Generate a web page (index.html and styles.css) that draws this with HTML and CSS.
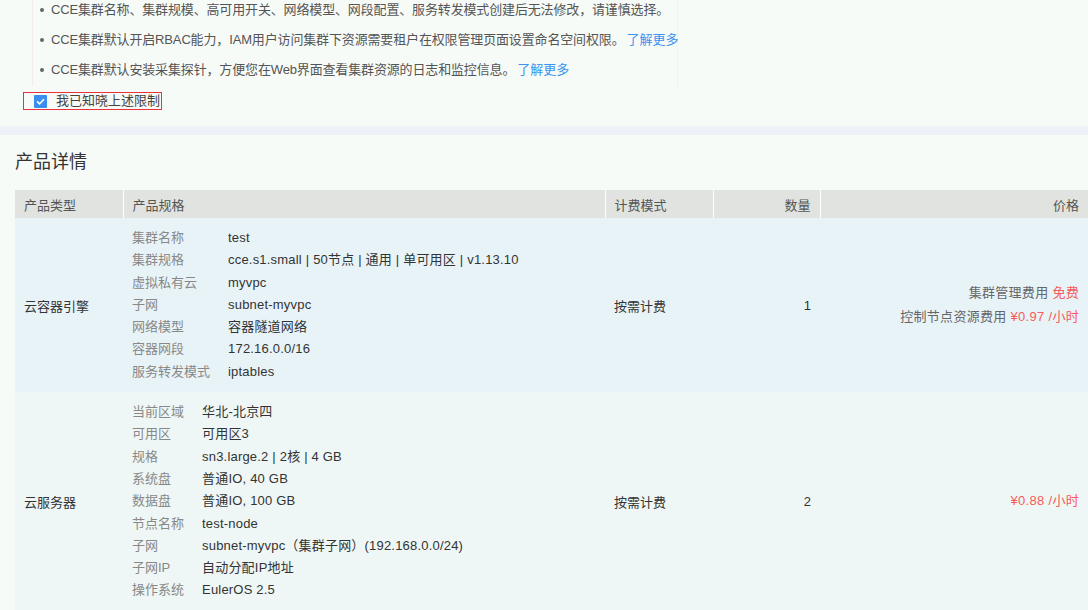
FILE: index.html
```html
<!DOCTYPE html>
<html lang="zh-CN">
<head>
    <meta charset="UTF-8">
    <meta name="viewport" content="width=device-width, initial-scale=1.0">
    <title>产品详情</title>
    <link rel="stylesheet" href="styles.css">
</head>
<body>

    <div class="notice-area">
        <ul class="notice">
            <li>CCE集群名称、集群规模、高可用开关、网络模型、网段配置、服务转发模式创建后无法修改，请谨慎选择。</li>
            <li>CCE集群默认开启RBAC能力，IAM用户访问集群下资源需要租户在权限管理页面设置命名空间权限。<a href="#" class="more">了解更多</a></li>
            <li>CCE集群默认安装采集探针，方便您在Web界面查看集群资源的日志和监控信息。<a href="#" class="more">了解更多</a></li>
        </ul>
        <label class="agree">
            <span class="checkbox">
                <svg width="9" height="7" viewBox="0 0 9 7"><path d="M1 3.4 L3.5 5.8 L8 1.2" fill="none" stroke="#fff" stroke-width="1.6"/></svg>
            </span>
            我已知晓上述限制
        </label>
    </div>

    <div class="divider"></div>

    <div class="details">
        <h2 class="section-title">产品详情</h2>

        <table class="product-table">
            <colgroup>
                <col style="width: 108px">
                <col style="width: 482px">
                <col style="width: 108px">
                <col style="width: 107px">
                <col>
            </colgroup>
            <thead>
                <tr>
                    <th>产品类型</th>
                    <th>产品规格</th>
                    <th>计费模式</th>
                    <th class="num">数量</th>
                    <th class="num">价格</th>
                </tr>
            </thead>
            <tbody>
                <tr class="row-cce">
                    <td>云容器引擎</td>
                    <td>
                        <div class="spec">
                            <span class="key">集群名称</span><span class="val">test</span>
                            <span class="key">集群规格</span><span class="val">cce.s1.small | 50节点 | 通用 | 单可用区 | v1.13.10</span>
                            <span class="key">虚拟私有云</span><span class="val">myvpc</span>
                            <span class="key">子网</span><span class="val">subnet-myvpc</span>
                            <span class="key">网络模型</span><span class="val">容器隧道网络</span>
                            <span class="key">容器网段</span><span class="val">172.16.0.0/16</span>
                            <span class="key">服务转发模式</span><span class="val">iptables</span>
                        </div>
                    </td>
                    <td>按需计费</td>
                    <td class="num">1</td>
                    <td class="num price">
                        <div>集群管理费用 <span class="red">免费</span></div>
                        <div>控制节点资源费用 <span class="red">¥0.97 /小时</span></div>
                    </td>
                </tr>
                <tr class="row-ecs">
                    <td>云服务器</td>
                    <td>
                        <div class="spec">
                            <span class="key">当前区域</span><span class="val">华北-北京四</span>
                            <span class="key">可用区</span><span class="val">可用区3</span>
                            <span class="key">规格</span><span class="val">sn3.large.2 | 2核 | 4 GB</span>
                            <span class="key">系统盘</span><span class="val">普通IO, 40 GB</span>
                            <span class="key">数据盘</span><span class="val">普通IO, 100 GB</span>
                            <span class="key">节点名称</span><span class="val">test-node</span>
                            <span class="key">子网</span><span class="val">subnet-myvpc（集群子网）(192.168.0.0/24)</span>
                            <span class="key">子网IP</span><span class="val">自动分配IP地址</span>
                            <span class="key">操作系统</span><span class="val">EulerOS 2.5</span>
                        </div>
                    </td>
                    <td>按需计费</td>
                    <td class="num">2</td>
                    <td class="num price"><span class="red">¥0.88 /小时</span></td>
                </tr>
            </tbody>
        </table>
    </div>

</body>
</html>
```

FILE: styles.css
```css
:root {
    --page-bg: #f7fbf8;
    --text-color: #333;
    --muted-color: #555;
    --label-color: #888;
    --link-color: #3b93f0;
    --red-color: #f95a5a;
}

body {
    margin: 0;
    font-family: "Liberation Sans", "Noto Sans CJK SC", sans-serif;
    font-size: 13px;
    color: var(--text-color);
    background-color: var(--page-bg);
    overflow: hidden;
}

.notice-area {
    height: 126px;
}

.notice {
    list-style: none;
    margin: 0 0 0 32px;
    padding: 0 0 6px 18px;
    width: 626px;
    border-left: 1px solid #f4ecec;
    border-right: 1px solid #f1f1ef;
}

.notice li {
    position: relative;
    height: 20px;
    line-height: 20px;
    margin-bottom: 10px;
    color: var(--muted-color);
    white-space: nowrap;
    letter-spacing: -0.15px;
}

.notice li:last-child {
    margin-bottom: 0;
}

.notice li::before {
    content: "";
    position: absolute;
    left: -11px;
    top: 8px;
    width: 4px;
    height: 4px;
    border-radius: 50%;
    background-color: #666;
}

.more {
    color: var(--link-color);
    text-decoration: none;
    margin-left: 2px;
    letter-spacing: 0;
}

.agree {
    display: inline-flex;
    align-items: center;
    margin: 6px 0 0 23px;
    height: 16px;
    width: 137px;
    padding: 0;
    border: 1px solid #e8333a;
    color: #444;
    line-height: 16px;
    gap: 9px;
}

.checkbox {
    display: inline-flex;
    align-items: center;
    justify-content: center;
    width: 13px;
    height: 13px;
    margin-left: 10px;
    background-color: #3a8ef0;
    border-radius: 1px;
}

.divider {
    height: 9px;
    background-color: #eef2f8;
}

.details {
    padding: 15px 0 0 15px;
}

.section-title {
    margin: 0 0 16px 0;
    font-size: 18px;
    font-weight: normal;
    line-height: 24px;
    color: #333;
}

.product-table {
    width: 100%;
    border-collapse: collapse;
    table-layout: fixed;
}

.product-table th {
    height: 28px;
    padding: 0 9px;
    background-color: #e0e3df;
    color: var(--muted-color);
    font-weight: normal;
    text-align: left;
    border-right: 1px solid #fff;
}

.product-table th:last-child {
    border-right: none;
}

.product-table td {
    padding: 9px;
    vertical-align: middle;
    color: var(--text-color);
}

.product-table .num {
    text-align: right;
}

.row-cce {
    background-color: #e8f3f8;
}

.row-ecs {
    background-color: #eef7f5;
}

.spec {
    display: grid;
    grid-template-columns: auto 1fr;
    column-gap: 18px;
    line-height: 22.3px;
}

.spec .key {
    color: var(--label-color);
}

.spec .val {
    color: var(--text-color);
    white-space: nowrap;
    letter-spacing: 0.2px;
}

.product-table .price {
    line-height: 24px;
    color: #666;
    letter-spacing: 0.3px;
}

.red {
    color: var(--red-color);
}
```
